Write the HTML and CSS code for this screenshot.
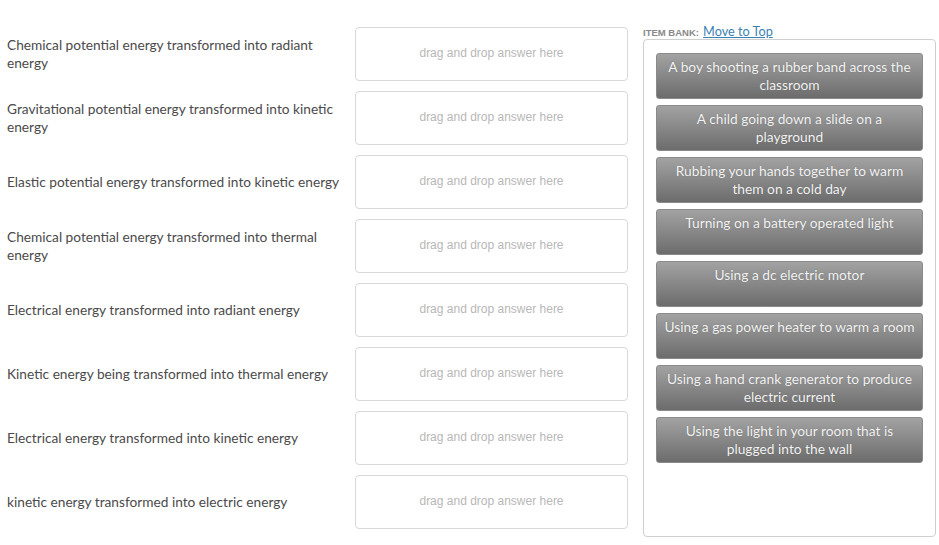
FILE: index.html
```html
<!DOCTYPE html>
<html>
<head>
<meta charset="utf-8">
<link rel="stylesheet" href="styles.css">
</head>
<body>
<div class="page">
  <div class="pairs">
    <div class="row"><div class="label">Chemical potential energy transformed into radiant energy</div><div class="drop">drag and drop answer here</div></div>
    <div class="row"><div class="label">Gravitational potential energy transformed into kinetic energy</div><div class="drop">drag and drop answer here</div></div>
    <div class="row"><div class="label">Elastic potential energy transformed into kinetic energy</div><div class="drop">drag and drop answer here</div></div>
    <div class="row"><div class="label">Chemical potential energy transformed into thermal energy</div><div class="drop">drag and drop answer here</div></div>
    <div class="row"><div class="label">Electrical energy transformed into radiant energy</div><div class="drop">drag and drop answer here</div></div>
    <div class="row"><div class="label">Kinetic energy being transformed into thermal energy</div><div class="drop">drag and drop answer here</div></div>
    <div class="row"><div class="label">Electrical energy transformed into kinetic energy</div><div class="drop">drag and drop answer here</div></div>
    <div class="row"><div class="label">kinetic energy transformed into electric energy</div><div class="drop">drag and drop answer here</div></div>
  </div>
  <div class="bank">
    <div class="bank-head"><span class="bank-title">ITEM BANK:</span> <a class="bank-link" href="#">Move to Top</a></div>
    <div class="bank-box">
      <div class="item">A boy shooting a rubber band across the classroom</div>
      <div class="item">A child going down a slide on a playground</div>
      <div class="item">Rubbing your hands together to warm them on a cold day</div>
      <div class="item">Turning on a battery operated light</div>
      <div class="item">Using a dc electric motor</div>
      <div class="item">Using a gas power heater to warm a room</div>
      <div class="item">Using a hand crank generator to produce electric current</div>
      <div class="item">Using the light in your room that is plugged into the wall</div>
    </div>
  </div>
</div>
</body>
</html>
```
FILE: styles.css
```css
html, body {
  margin: 0;
  padding: 0;
  background: #fff;
}
body {
  font-family: "Lato", "Open Sans", sans-serif;
  color: #444;
}
.page {
  display: flex;
  align-items: flex-start;
  padding-top: 22px;
}
.pairs {
  display: flex;
  flex-direction: column;
  gap: 10px;
  padding-top: 5px;
}
.row {
  display: flex;
  align-items: center;
}
.label {
  width: 348px;
  padding-left: 7px;
  font-size: 13.7px;
  line-height: 18px;
  color: #4a4a4a;
}
.drop {
  box-sizing: border-box;
  width: 273px;
  height: 54px;
  border: 1px solid #d9d9d9;
  border-radius: 4px;
  display: flex;
  align-items: center;
  justify-content: center;
  padding-bottom: 2px;
  font-family: "Liberation Sans", Arial, sans-serif;
  font-size: 12px;
  color: #b8b8b8;
}
.bank {
  margin-left: 15px;
  width: 293px;
}
.bank-head {
  height: 17px;
  line-height: 16px;
}
.bank-title {
  font-family: "Liberation Sans", Arial, sans-serif;
  font-size: 9.5px;
  font-weight: bold;
  color: #888;
}
.bank-link {
  font-size: 12.7px;
  color: #3b82b4;
  text-decoration: underline;
}
.bank-box {
  box-sizing: border-box;
  height: 498px;
  border: 1px solid #cfcfcf;
  border-radius: 4px;
  padding: 13px 12px;
  display: flex;
  flex-direction: column;
  gap: 6px;
}
.item {
  box-sizing: border-box;
  min-height: 46px;
  padding: 4px 6px;
  border-radius: 3px;
  border: 1px solid #8a8a8a;
  background: linear-gradient(#a2a2a2, #8a8a8a 45%, #6c6c6c);
  color: #f4f4f4;
  text-align: center;
  font-size: 13.75px;
  line-height: 18px;
  text-shadow: 0 0 1px rgba(0,0,0,0.3);
}
```
